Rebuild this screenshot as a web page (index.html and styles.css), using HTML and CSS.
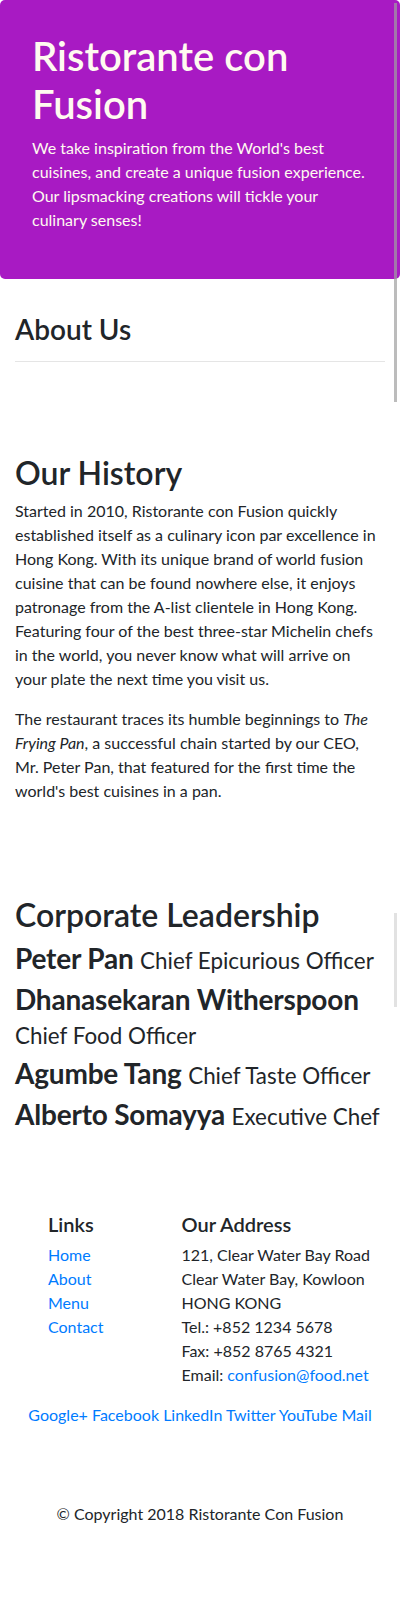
FILE: index.html
```html
<!DOCTYPE html>
<html lang="en">
<head>
<meta charset="utf-8">
<title>Ristorante con Fusion: About Us</title>
<link rel="stylesheet" href="styles.css">
</head>
<body>
<header class="jumbotron">
  <h1 class="brand">Ristorante con Fusion</h1>
  <p class="lead-text">We take inspiration from the World's best cuisines, and create a unique fusion experience. Our lipsmacking creations will tickle your culinary senses!</p>
</header>

<main class="container">
  <section class="page-head">
    <h3 class="page-title">About Us</h3>
    <hr class="rule">
  </section>

  <section class="block block-history">
    <h2 class="section-title">Our History</h2>
    <p class="text">Started in 2010, Ristorante con Fusion quickly established itself as a culinary icon par excellence in Hong Kong. With its unique brand of world fusion cuisine that can be found nowhere else, it enjoys patronage from the A-list clientele in Hong Kong. Featuring four of the best three-star Michelin chefs in the world, you never know what will arrive on your plate the next time you visit us.</p>
    <p class="text">The restaurant traces its humble beginnings to <em>The Frying Pan</em>, a successful chain started by our CEO, Mr. Peter Pan, that featured for the first time the world's best cuisines in a pan.</p>
  </section>

  <section class="block block-leaders">
    <h2 class="section-title">Corporate Leadership</h2>
    <h3 class="person">Peter Pan <small class="role">Chief Epicurious Officer</small></h3>
    <h3 class="person">Dhanasekaran Witherspoon <small class="role">Chief Food Officer</small></h3>
    <h3 class="person">Agumbe Tang <small class="role">Chief Taste Officer</small></h3>
    <h3 class="person">Alberto Somayya <small class="role">Executive Chef</small></h3>
  </section>
</main>

<footer class="footer">
  <div class="footer-cols">
    <div class="col-links">
      <h5 class="footer-title">Links</h5>
      <ul class="link-list">
        <li><a class="link" href="#">Home</a></li>
        <li><a class="link" href="#">About</a></li>
        <li><a class="link" href="#">Menu</a></li>
        <li><a class="link" href="#">Contact</a></li>
      </ul>
    </div>
    <div class="col-address">
      <h5 class="footer-title">Our Address</h5>
      <address class="address">
        121, Clear Water Bay Road<br>
        Clear Water Bay, Kowloon<br>
        HONG KONG<br>
        Tel.: +852 1234 5678<br>
        Fax: +852 8765 4321<br>
        Email: <a class="link" href="#">confusion@food.net</a>
      </address>
    </div>
  </div>
  <div class="social">
    <a class="link" href="#">Google+</a>
    <a class="link" href="#">Facebook</a>
    <a class="link" href="#">LinkedIn</a>
    <a class="link" href="#">Twitter</a>
    <a class="link" href="#">YouTube</a>
    <a class="link" href="#">Mail</a>
  </div>
  <p class="copyright">© Copyright 2018 Ristorante Con Fusion</p>
</footer>

<div class="scroll-thumb thumb-top"></div>
<div class="scroll-thumb thumb-mid"></div>
</body>
</html>
```
FILE: styles.css
```css
* { box-sizing: border-box; }

html, body {
  margin: 0;
  padding: 0;
  background: #fff;
}

body {
  position: relative;
  width: 400px;
  min-height: 1618px;
  font-family: Lato, "Open Sans", sans-serif;
  font-size: 16px;
  line-height: 24px;
  color: #212529;
}

h1, h2, h3, h5 {
  margin: 0 0 8px;
  font-weight: 600;
  line-height: 1.2;
}

.jumbotron {
  background: #a81ac3;
  border-radius: 5px;
  padding: 32px 32px 31px;
  color: floralwhite;
}

.brand {
  font-size: 40px;
  line-height: 48px;
  margin-bottom: 8px;
}

.lead-text {
  margin: 0 0 16px;
}

.container {
  padding: 34px 15px 0;
}

.page-title {
  font-size: 28px;
}

.rule {
  height: 0;
  margin: 14px 0 16px;
  border: 0;
  border-top: 1px solid rgba(0, 0, 0, 0.1);
}

.block-history {
  padding-top: 76px;
}

.block-leaders {
  padding-top: 77px;
}

.section-title {
  font-size: 32px;
  margin-bottom: 7px;
}

.block-leaders .section-title {
  margin-bottom: 8px;
}

.text {
  margin: 0 0 16px;
}

.person {
  font-size: 28px;
  font-weight: 700;
  letter-spacing: -0.2px;
  margin-bottom: 7px;
}

.role {
  font-size: 80%;
  font-weight: 400;
  letter-spacing: 0;
}

.footer {
  padding-top: 74px;
}

.footer-cols {
  display: flex;
  padding: 0 15px 0 48px;
}

.col-links {
  width: 133.5px;
  flex: none;
}

.col-address {
  flex: 1;
}

.footer-title {
  font-size: 20px;
  margin-bottom: 7px;
}

.link-list {
  list-style: none;
  margin: 0;
  padding: 0;
}

.address {
  font-style: normal;
  margin: 0 0 16px;
}

.link {
  color: #007bff;
  text-decoration: none;
}

.social {
  text-align: center;
}

.copyright {
  margin: 75px 0 16px;
  text-align: center;
}

.scroll-thumb {
  position: absolute;
  left: 394px;
  width: 3px;
}

.thumb-top {
  top: 3px;
  height: 399px;
  background: rgba(160, 160, 160, 0.7);
}

.thumb-mid {
  top: 913px;
  height: 94px;
  background: #e2e2e2;
}
```
